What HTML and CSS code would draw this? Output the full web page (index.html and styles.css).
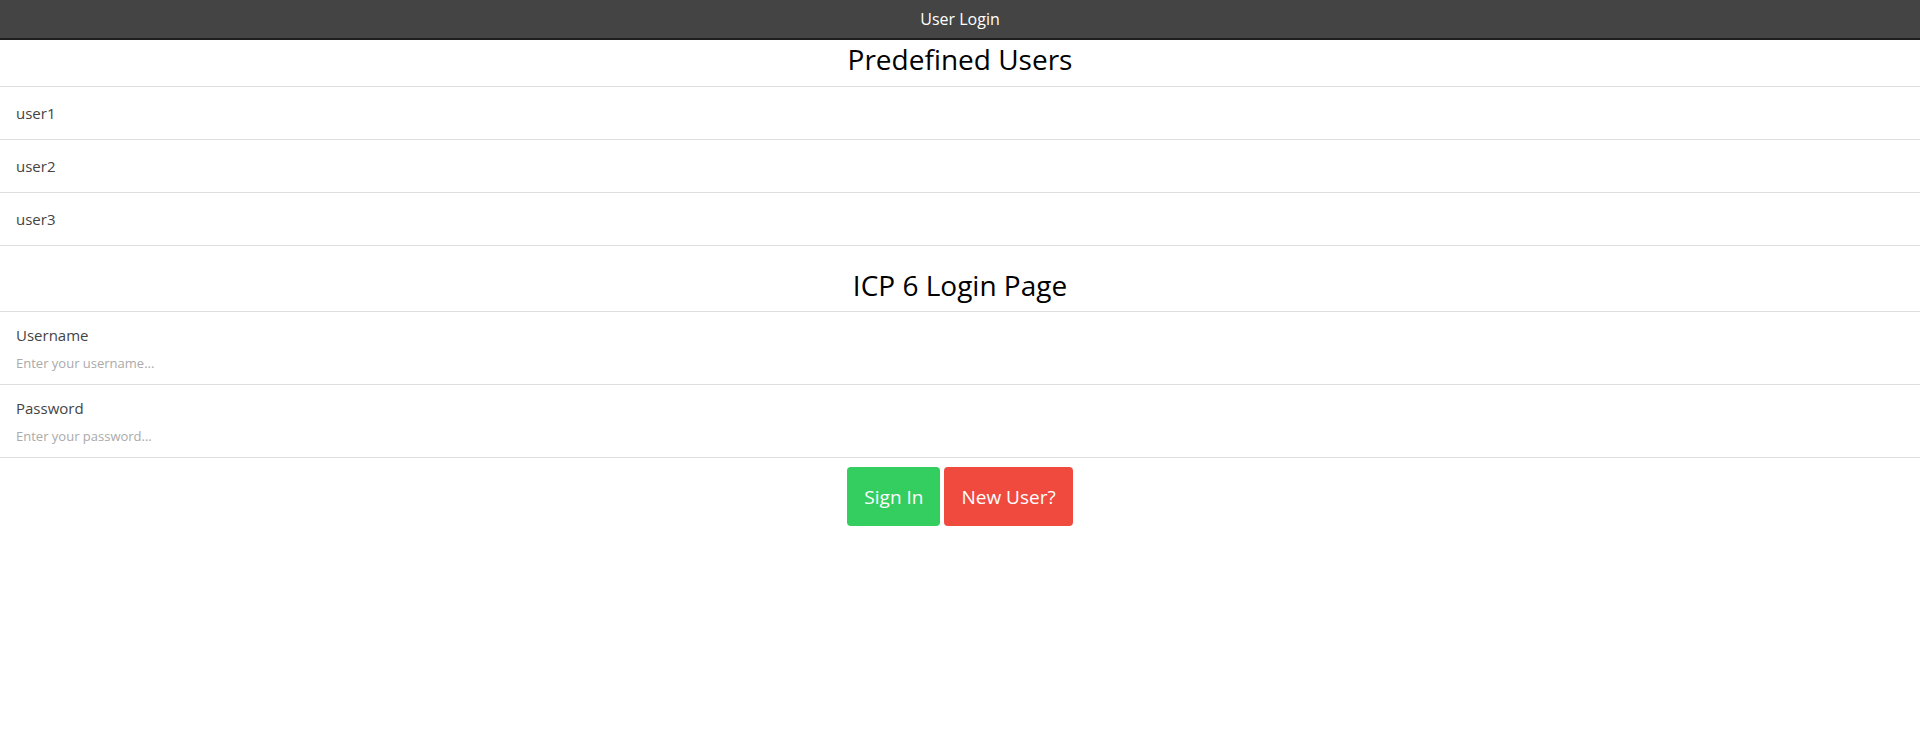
FILE: index.html
```html
<!DOCTYPE html>
<html lang="en">
<head>
<meta charset="utf-8">
<title>User Login</title>
<link rel="stylesheet" href="styles.css">
</head>
<body>
  <header class="toolbar">
    <div class="toolbar-title">User Login</div>
  </header>
  <main class="content">
    <h1 class="section-title">Predefined Users</h1>
    <ul class="user-list">
      <li class="item">user1</li>
      <li class="item">user2</li>
      <li class="item">user3</li>
    </ul>
    <h1 class="section-title section-title-spaced">ICP 6 Login Page</h1>
    <form class="login-form">
      <div class="item field">
        <label class="field-label" for="username">Username</label>
        <input class="field-input" id="username" type="text" placeholder="Enter your username...">
      </div>
      <div class="item field">
        <label class="field-label" for="password">Password</label>
        <input class="field-input" id="password" type="password" placeholder="Enter your password...">
      </div>
      <div class="actions">
        <button type="button" class="btn btn-green">Sign In</button>
        <button type="button" class="btn btn-red">New User?</button>
      </div>
    </form>
  </main>
</body>
</html>
```
FILE: styles.css
```css
* { box-sizing: border-box; }
html, body {
  margin: 0;
  padding: 0;
  background: #fff;
  font-family: "Open Sans", "Noto Sans", sans-serif;
  color: #000;
}
.toolbar {
  height: 40px;
  background: #444;
  border-bottom: 2px solid #1e1e1e;
  display: flex;
  align-items: center;
  justify-content: center;
}
.toolbar-title {
  color: #fff;
  font-size: 16px;
  line-height: 20px;
}
.section-title {
  margin: 0;
  height: 47px;
  line-height: 39px;
  font-size: 28px;
  font-weight: 400;
  text-align: center;
  border-bottom: 1px solid #dedede;
}
.section-title-spaced {
  height: 66px;
  padding-top: 20px;
}
.user-list {
  list-style: none;
  margin: 0;
  padding: 0;
}
.item {
  border-bottom: 1px solid #dedede;
  padding-left: 16px;
  font-size: 15px;
  color: #444;
}
.user-list .item {
  height: 53px;
  line-height: 53px;
}
.field {
  height: 73px;
  display: flex;
  flex-direction: column;
  padding-top: 13px;
}
.field-label {
  font-size: 15px;
  line-height: 20px;
  color: #444;
}
.field-input {
  border: 0;
  outline: none;
  padding: 0;
  margin-top: 8px;
  font-family: inherit;
  font-size: 13px;
  line-height: 20px;
  color: #000;
  background: transparent;
}
.field-input::placeholder { color: #aaa; }
.actions {
  display: flex;
  justify-content: center;
  gap: 4px;
  padding-top: 9px;
}
.btn {
  height: 59px;
  border: 0;
  border-radius: 4px;
  padding: 0 17px;
  font-family: inherit;
  font-size: 19px;
  color: #fff;
  cursor: pointer;
}
.btn-green { background: #34cd60; }
.btn-red { background: #f04a3e; }
```
